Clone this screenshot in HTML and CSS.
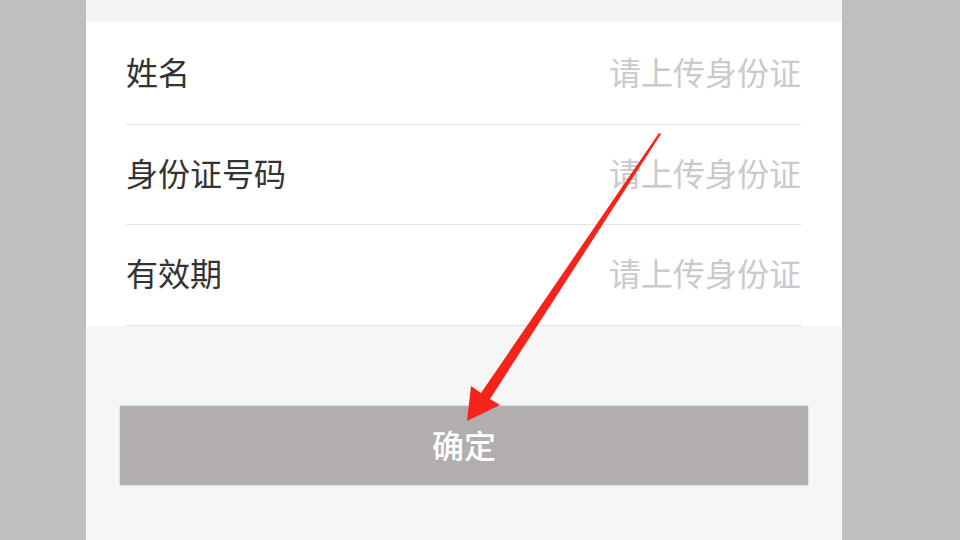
FILE: index.html
```html
<!DOCTYPE html>
<html lang="zh-CN">
<head>
<meta charset="utf-8">
<title>身份证信息</title>
<link rel="stylesheet" href="styles.css">
</head>
<body>
<div class="screen">
  <div class="side side-left"></div>
  <main class="panel">
    <div class="top-strip"></div>
    <section class="card">
      <div class="row row-first"><span class="label">姓名</span><span class="hint">请上传身份证</span></div>
      <div class="row"><span class="label">身份证号码</span><span class="hint">请上传身份证</span></div>
      <div class="row row-last"><span class="label">有效期</span><span class="hint">请上传身份证</span></div>
    </section>
    <button class="confirm">确定</button>
  </main>
  <div class="side side-right"></div>
  <svg class="arrow" width="960" height="540" viewBox="0 0 960 540">
    <polygon points="661,134 490,399 500,405 467,421 471,386 481,393 659,133" fill="#f5231a"/>
  </svg>
</div>
</body>
</html>
```

FILE: styles.css
```css
html, body {
  margin: 0;
  padding: 0;
}
body {
  width: 960px;
  height: 540px;
  overflow: hidden;
  font-family: "Noto Sans CJK SC", "Noto Sans", sans-serif;
}
.screen {
  position: relative;
  display: flex;
  width: 960px;
  height: 540px;
}
.side {
  background: #bfbfbf;
  height: 540px;
}
.side-left { width: 86px; }
.side-right { width: 118px; }
.panel {
  width: 756px;
  height: 540px;
  background: #f6f6f6;
  display: flex;
  flex-direction: column;
}
.top-strip {
  height: 22px;
  background: #f4f4f4;
}
.card {
  background: #ffffff;
  padding: 0 41px 0 40px;
}
.row {
  height: 100px;
  box-sizing: border-box;
  border-bottom: 1px solid #e4e4e6;
  display: flex;
  align-items: center;
  justify-content: space-between;
  padding-bottom: 6px;
}
.row-first { height: 103px; padding-bottom: 5px; }
.row-last { height: 101px; }
.label {
  font-size: 32px;
  color: #333333;
  line-height: 1;
}
.hint {
  font-size: 32px;
  color: #c9c9ce;
  line-height: 1;
}
.confirm {
  margin: 80px 34px 0 34px;
  height: 79px;
  border: none;
  background: #b3aeae;
  color: #ffffff;
  font-family: "Noto Sans CJK SC", sans-serif;
  font-size: 32px;
  font-weight: 500;
  box-shadow: 0 0 2px rgba(0, 0, 0, 0.25);
  padding: 0 0 4px 0;
}
.arrow {
  position: absolute;
  left: 0;
  top: 0;
  pointer-events: none;
}
```
